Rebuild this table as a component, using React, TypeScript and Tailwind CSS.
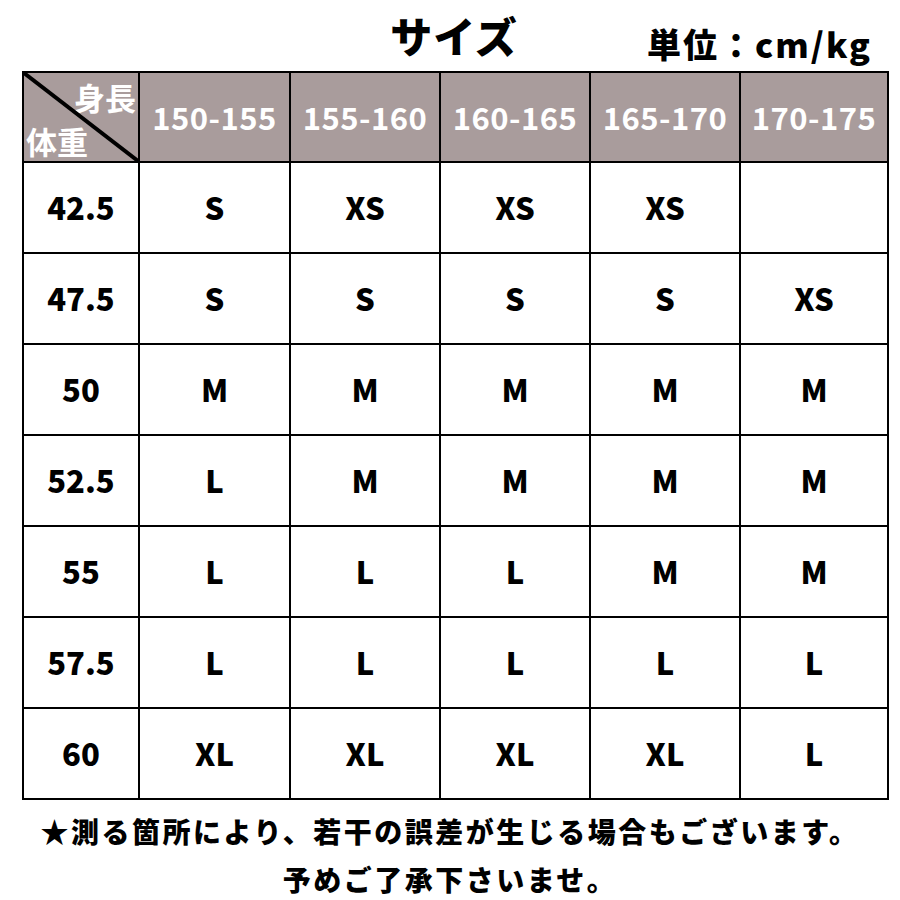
import React from "react";

const heights = ["150-155", "155-160", "160-165", "165-170", "170-175"];

const rows: { weight: string; sizes: string[] }[] = [
  { weight: "42.5", sizes: ["S", "XS", "XS", "XS", ""] },
  { weight: "47.5", sizes: ["S", "S", "S", "S", "XS"] },
  { weight: "50", sizes: ["M", "M", "M", "M", "M"] },
  { weight: "52.5", sizes: ["L", "M", "M", "M", "M"] },
  { weight: "55", sizes: ["L", "L", "L", "M", "M"] },
  { weight: "57.5", sizes: ["L", "L", "L", "L", "L"] },
  { weight: "60", sizes: ["XL", "XL", "XL", "XL", "L"] },
];

const colWidths = ["w-[116px]", "w-[151px]", "w-[150px]", "w-[150px]", "w-[150px]", "w-[148px]"];

const font = "font-['Noto_Sans_CJK_JP','Noto_Sans',sans-serif]";

export default function App() {
  return (
    <div className={`w-[900px] h-[900px] bg-white text-black ${font} font-black`}>
      {/* title row */}
      <div className="ml-[22px] w-[864px] h-[71px] grid grid-cols-[1fr_auto_1fr] items-center">
        <div />
        <div className="text-[42px] leading-none tracking-[1px] -mt-[2px]">サイズ</div>
        <div className="flex justify-end pr-[14px] pt-[16px] text-[34px] leading-none tracking-[2px] whitespace-nowrap">
          単位：cm/kg
        </div>
      </div>

      {/* size table */}
      <table className="ml-[22px] border-collapse table-fixed">
        <colgroup>
          {colWidths.map((w, i) => (
            <col key={i} className={w} />
          ))}
        </colgroup>
        <thead>
          <tr className="h-[90px] bg-[#a99c9c] text-white">
            <th className="relative border-2 border-black p-0">
              <svg className="absolute inset-0 w-full h-full" viewBox="0 0 116 90" preserveAspectRatio="none">
                <line x1="0" y1="0" x2="116" y2="90" stroke="#000" strokeWidth="4" />
              </svg>
              <div className="flex flex-col h-[88px] text-[31px] leading-none font-bold">
                <span className="self-end pr-[2px] pt-[8px]">身長</span>
                <span className="self-start pl-[2px] mt-auto pb-[5px]">体重</span>
              </div>
            </th>
            {heights.map((h) => (
              <th key={h} className="border-2 border-black text-[31px] font-bold tracking-[0.5px] text-center">
                {h}
              </th>
            ))}
          </tr>
        </thead>
        <tbody>
          {rows.map((r) => (
            <tr key={r.weight} className="h-[91px]">
              <td className="border-2 border-black text-center text-[31px]">{r.weight}</td>
              {r.sizes.map((s, i) => (
                <td key={i} className="border-2 border-black text-center text-[31px]">
                  {s}
                </td>
              ))}
            </tr>
          ))}
        </tbody>
      </table>

      {/* note */}
      <div className="mt-[16px] flex flex-col items-center gap-[18px] text-[28px] leading-[30px] tracking-[2.5px]">
        <p className="whitespace-nowrap">★測る箇所により、若干の誤差が生じる場合もございます。</p>
        <p className="whitespace-nowrap">予めご了承下さいませ。</p>
      </div>
    </div>
  );
}
